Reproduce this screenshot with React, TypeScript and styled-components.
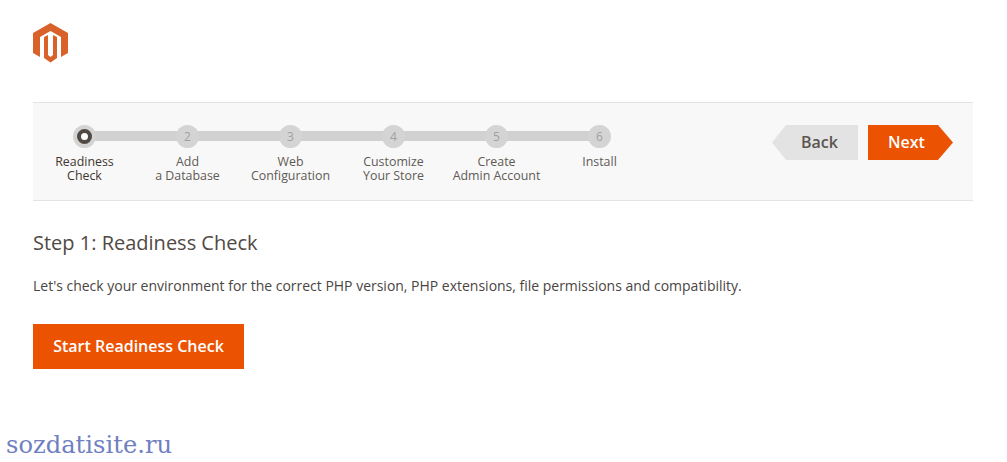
import React from 'react';
import styled, { createGlobalStyle } from 'styled-components';

const GlobalStyle = createGlobalStyle`
  html, body {
    margin: 0;
    padding: 0;
    background: #ffffff;
  }
  body {
    font-family: "Open Sans", "Liberation Sans", sans-serif;
    color: #41362f;
  }
`;

const Page = styled.div`
  position: relative;
  height: 462px;
  overflow: hidden;
  padding: 0 34px 0 33px;
`;

const Header = styled.header`
  height: 102px;
  padding-top: 23px;
  box-sizing: border-box;
`;

const Nav = styled.nav`
  display: flex;
  justify-content: space-between;
  height: 99px;
  box-sizing: border-box;
  padding: 22px 20px 0 0;
  background: #f8f8f8;
  border-top: 1px solid #e3e3e3;
  border-bottom: 1px solid #e3e3e3;
`;

const StepList = styled.ol`
  display: flex;
  margin: 0;
  padding: 0;
  list-style: none;
`;

const Step = styled.li<{ $last?: boolean }>`
  position: relative;
  display: flex;
  flex-direction: column;
  align-items: center;
  width: 103px;

  &::after {
    content: '';
    display: ${props => (props.$last ? 'none' : 'block')};
    position: absolute;
    top: 6px;
    left: 51px;
    width: 103px;
    height: 10px;
    background: #d1d1d1;
  }
`;

const Dot = styled.span<{ $active?: boolean }>`
  position: relative;
  z-index: 1;
  display: flex;
  align-items: center;
  justify-content: center;
  width: 23px;
  height: 23px;
  border-radius: 50%;
  background: #d4d4d4;
  color: #a3a09e;
  font-size: 12px;
  font-weight: 400;

  ${props => props.$active && `
    &::before {
      content: '';
      width: 7px;
      height: 7px;
      border-radius: 50%;
      background: #ffffff;
      border: 4px solid #514943;
    }
  `}
`;

const StepLabel = styled.span<{ $active?: boolean }>`
  margin-top: 7px;
  font-size: 12.4px;
  line-height: 14px;
  text-align: center;
  white-space: pre-line;
  color: ${props => (props.$active ? '#41362f' : '#5f5a56')};
`;

const Actions = styled.div`
  display: flex;
  gap: 10px;
  height: 35px;
`;

const ArrowButton = styled.button<{ $primary?: boolean }>`
  width: ${props => (props.$primary ? '85px' : '86px')};
  height: 35px;
  margin: 0;
  padding: ${props => (props.$primary ? '0 8px 2px 0' : '0 0 2px 9px')};
  border: 0;
  font-family: inherit;
  font-size: 16px;
  font-weight: 600;
  color: ${props => (props.$primary ? '#ffffff' : '#5c5550')};
  background: ${props => (props.$primary ? '#eb5202' : '#e3e3e3')};
  clip-path: ${props =>
    props.$primary
      ? 'polygon(0 0, 70px 0, 100% 50%, 70px 100%, 0 100%)'
      : 'polygon(14px 0, 100% 0, 100% 100%, 14px 100%, 0 50%)'};
`;

const Title = styled.h1`
  margin: 28px 0 0;
  font-size: 20px;
  line-height: 27px;
  font-weight: 400;
  color: #514943;
`;

const Intro = styled.p`
  margin: 20px 0 0;
  font-size: 14px;
  line-height: 20px;
  letter-spacing: -0.01px;
  color: #4a4542;
`;

const StartButton = styled.button`
  display: block;
  width: 211px;
  height: 45px;
  margin: 28px 0 0;
  padding: 0 0 2px;
  border: 0;
  background: #eb5202;
  color: #ffffff;
  font-family: inherit;
  font-size: 16px;
  font-weight: 600;
`;

const Watermark = styled.div`
  position: absolute;
  left: 6px;
  top: 428px;
  font-family: "DejaVu Serif", "Liberation Serif", serif;
  font-size: 24.2px;
  line-height: 34px;
  color: #6f7fc0;
`;

const Logo = () => (
  <svg width="36" height="40" viewBox="0 0 36 40" fill="#d9622b">
    <path d="M17.5 0 L35 10 V30 L28 34 V14 L17.5 8 L7 14 V34 L0 30 V10 Z" />
    <path d="M11 14 L15 12 V32 L17.5 34 L20 32 V12 L24 14 V35 L17.5 39.5 L11 35 Z" />
  </svg>
);

const steps = [
  'Readiness\nCheck',
  'Add\na Database',
  'Web\nConfiguration',
  'Customize\nYour Store',
  'Create\nAdmin Account',
  'Install',
];

export default function App() {
  return (
    <Page>
      <GlobalStyle />
      <Header>
        <Logo />
      </Header>
      <Nav>
        <StepList>
          {steps.map((label, i) => (
            <Step key={label} $last={i === steps.length - 1}>
              <Dot $active={i === 0}>{i === 0 ? null : i + 1}</Dot>
              <StepLabel $active={i === 0}>{label}</StepLabel>
            </Step>
          ))}
        </StepList>
        <Actions>
          <ArrowButton>Back</ArrowButton>
          <ArrowButton $primary>Next</ArrowButton>
        </Actions>
      </Nav>
      <Title>Step 1: Readiness Check</Title>
      <Intro>
        Let's check your environment for the correct PHP version, PHP extensions, file permissions and compatibility.
      </Intro>
      <StartButton>Start Readiness Check</StartButton>
      <Watermark>sozdatisite.ru</Watermark>
    </Page>
  );
}
